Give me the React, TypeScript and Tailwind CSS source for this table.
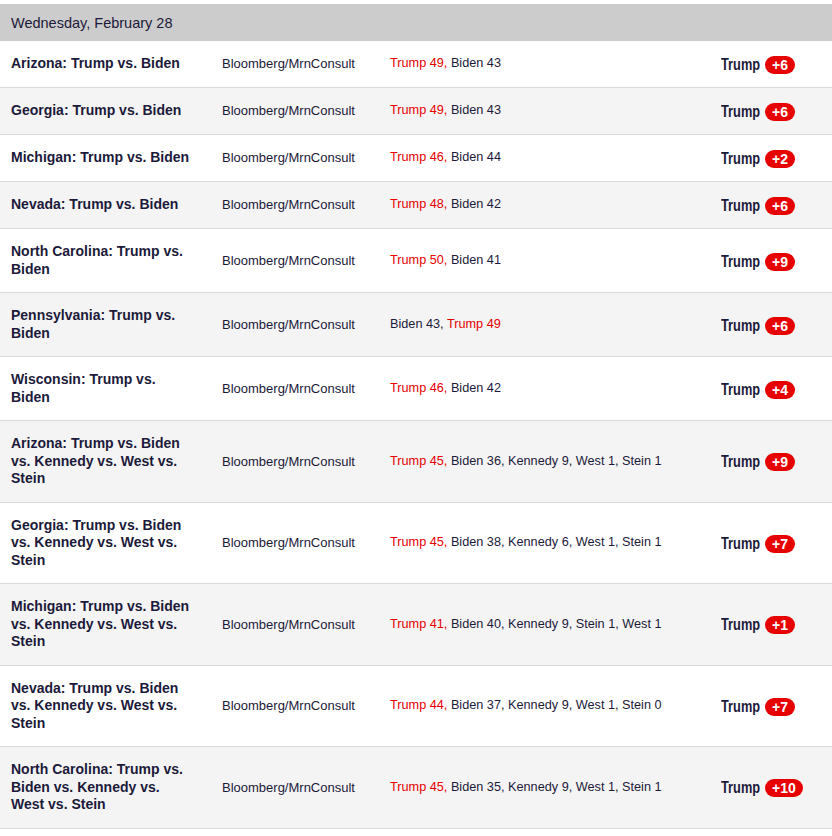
import React from "react";

type Part = { text: string; red?: boolean };

type PollRow = {
  race: string;
  pollster: string;
  results: Part[];
  spread: string;
};

const rows: PollRow[] = [
  {
    race: "Arizona: Trump vs. Biden",
    pollster: "Bloomberg/MrnConsult",
    results: [{ text: "Trump 49,", red: true }, { text: " Biden 43" }],
    spread: "+6",
  },
  {
    race: "Georgia: Trump vs. Biden",
    pollster: "Bloomberg/MrnConsult",
    results: [{ text: "Trump 49,", red: true }, { text: " Biden 43" }],
    spread: "+6",
  },
  {
    race: "Michigan: Trump vs. Biden",
    pollster: "Bloomberg/MrnConsult",
    results: [{ text: "Trump 46,", red: true }, { text: " Biden 44" }],
    spread: "+2",
  },
  {
    race: "Nevada: Trump vs. Biden",
    pollster: "Bloomberg/MrnConsult",
    results: [{ text: "Trump 48,", red: true }, { text: " Biden 42" }],
    spread: "+6",
  },
  {
    race: "North Carolina: Trump vs. Biden",
    pollster: "Bloomberg/MrnConsult",
    results: [{ text: "Trump 50,", red: true }, { text: " Biden 41" }],
    spread: "+9",
  },
  {
    race: "Pennsylvania: Trump vs. Biden",
    pollster: "Bloomberg/MrnConsult",
    results: [{ text: "Biden 43, " }, { text: "Trump 49", red: true }],
    spread: "+6",
  },
  {
    race: "Wisconsin: Trump vs. Biden",
    pollster: "Bloomberg/MrnConsult",
    results: [{ text: "Trump 46,", red: true }, { text: " Biden 42" }],
    spread: "+4",
  },
  {
    race: "Arizona: Trump vs. Biden vs. Kennedy vs. West vs. Stein",
    pollster: "Bloomberg/MrnConsult",
    results: [
      { text: "Trump 45,", red: true },
      { text: " Biden 36, Kennedy 9, West 1, Stein 1" },
    ],
    spread: "+9",
  },
  {
    race: "Georgia: Trump vs. Biden vs. Kennedy vs. West vs. Stein",
    pollster: "Bloomberg/MrnConsult",
    results: [
      { text: "Trump 45,", red: true },
      { text: " Biden 38, Kennedy 6, West 1, Stein 1" },
    ],
    spread: "+7",
  },
  {
    race: "Michigan: Trump vs. Biden vs. Kennedy vs. West vs. Stein",
    pollster: "Bloomberg/MrnConsult",
    results: [
      { text: "Trump 41,", red: true },
      { text: " Biden 40, Kennedy 9, Stein 1, West 1" },
    ],
    spread: "+1",
  },
  {
    race: "Nevada: Trump vs. Biden vs. Kennedy vs. West vs. Stein",
    pollster: "Bloomberg/MrnConsult",
    results: [
      { text: "Trump 44,", red: true },
      { text: " Biden 37, Kennedy 9, West 1, Stein 0" },
    ],
    spread: "+7",
  },
  {
    race: "North Carolina: Trump vs. Biden vs. Kennedy vs. West vs. Stein",
    pollster: "Bloomberg/MrnConsult",
    results: [
      { text: "Trump 45,", red: true },
      { text: " Biden 35, Kennedy 9, West 1, Stein 1" },
    ],
    spread: "+10",
  },
];

function Row({ row, index }: { row: PollRow; index: number }) {
  return (
    <div
      className={
        "flex items-center border-b border-[#d9d9d9] py-[14px] pl-[11px] leading-[17.5px] " +
        (index % 2 === 1 ? "bg-[#f4f4f4]" : "bg-white")
      }
    >
      <div className="w-[180px] mr-[31px] text-[14px] font-bold">{row.race}</div>
      <div className="w-[168px] text-[13px]">{row.pollster}</div>
      <div className="w-[331px] text-[12.7px]">
        {row.results.map((p, i) => (
          <span key={i} className={p.red ? "text-[#e60000]" : ""}>
            {p.text}
          </span>
        ))}
      </div>
      <div className="flex items-center translate-y-[1px]">
        {/* narrow bold label, squeezed since no condensed face is installed */}
        <span className="w-[44px] overflow-visible whitespace-nowrap">
          <span className="inline-block origin-left scale-x-[0.8] text-[16px] font-bold leading-[18px]">
            Trump
          </span>
        </span>
        <span className="rounded-full bg-[#e60000] px-[7px] text-[14px] font-bold leading-[18px] text-white">
          {row.spread}
        </span>
      </div>
    </div>
  );
}

export default function App() {
  return (
    <div className="w-[832px] bg-white pt-[4px] font-['Liberation_Sans',Arial,sans-serif] text-[#1c1a3a]">
      <div className="bg-[#cccccc] pt-[11px] pb-[9px] pl-[11px] text-[14.5px] leading-[17px]">
        Wednesday, February 28
      </div>
      {rows.map((r, i) => (
        <Row key={i} row={r} index={i} />
      ))}
    </div>
  );
}
